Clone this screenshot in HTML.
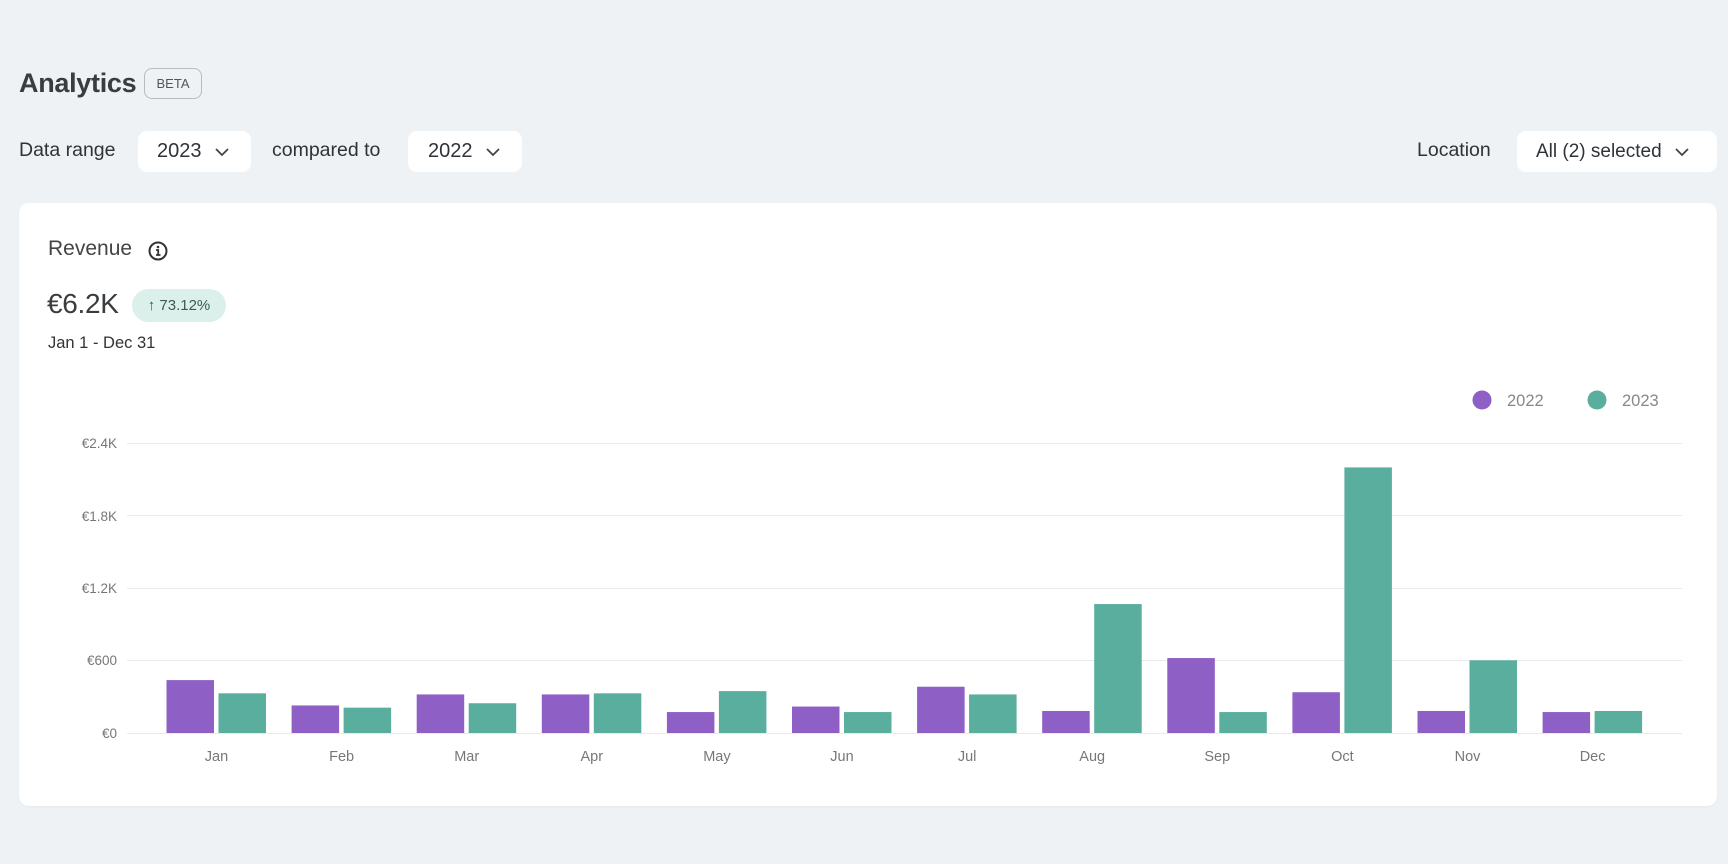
<!DOCTYPE html><html><head><meta charset="utf-8"><style>
*{margin:0;padding:0;box-sizing:border-box}
body{width:1728px;height:864px;background:#eef2f5;font-family:"Liberation Sans",sans-serif;color:#2f3337;position:relative;overflow:hidden}
.a{position:absolute;white-space:nowrap}
.dd{position:absolute;background:#fff;border-radius:9px;height:41px;display:flex;align-items:center;font-size:20px;color:#2f3337}
.dd svg{margin-left:12px}
</style></head><body>
<div class="a" style="left:19px;top:68px;font-size:27px;font-weight:bold;color:#3a3d40;letter-spacing:-0.3px">Analytics</div>
<div class="a" style="left:144px;top:68px;width:58px;height:31px;border:1.5px solid #b9bcbf;border-radius:8px;font-size:13px;color:#555;display:flex;align-items:center;justify-content:center">BETA</div>
<div class="a" style="left:19px;top:139px;font-size:19.5px">Data range</div>
<div class="dd" style="left:138px;top:131px;width:113px;padding-left:19px">2023<svg width="16" height="10" viewBox="0 0 16 10"><path d="M2 2l6 6 6-6" fill="none" stroke="#444" stroke-width="1.8"/></svg></div>
<div class="a" style="left:272px;top:139px;font-size:19.5px">compared to</div>
<div class="dd" style="left:408px;top:131px;width:114px;padding-left:20px">2022<svg width="16" height="10" viewBox="0 0 16 10"><path d="M2 2l6 6 6-6" fill="none" stroke="#444" stroke-width="1.8"/></svg></div>
<div class="a" style="left:1417px;top:139px;font-size:19.5px">Location</div>
<div class="dd" style="left:1517px;top:131px;width:200px;padding-left:19px;font-size:19px">All (2) selected<svg width="16" height="10" viewBox="0 0 16 10"><path d="M2 2l6 6 6-6" fill="none" stroke="#444" stroke-width="1.8"/></svg></div>
<div class="a" style="left:19px;top:203px;width:1698px;height:603px;background:#fff;border-radius:10px;box-shadow:0 1px 2px rgba(0,0,0,0.04)"></div>
<div class="a" style="left:48px;top:237px;font-size:21px;color:#444">Revenue</div>
<svg class="a" style="left:147px;top:240px" width="22" height="22" viewBox="0 0 22 22"><circle cx="11" cy="11" r="8.5" fill="none" stroke="#333" stroke-width="2"/><circle cx="11" cy="7" r="1.3" fill="#333"/><path d="M9 10h2.2v5M9 15h4.5" stroke="#333" stroke-width="1.8" fill="none"/></svg>
<div class="a" style="left:47px;top:288px;font-size:28px;color:#3a3d40;letter-spacing:-0.3px">€6.2K</div>
<div class="a" style="left:132px;top:289px;width:94px;height:33px;background:#dbefeb;border-radius:17px;font-size:15px;color:#3d5a55;display:flex;align-items:center;justify-content:center">↑ 73.12%</div>
<div class="a" style="left:48px;top:334px;font-size:16.5px;color:#333">Jan 1 - Dec 31</div>
<svg class="a" style="left:0;top:0" width="1728" height="864">
<g fill="#8e5fc4"><circle cx="1482" cy="400" r="9.5"/></g><circle cx="1597" cy="400" r="9.5" fill="#5aae9d"/>
<g font-family="Liberation Sans" font-size="16.5" fill="#888"><text x="1507" y="406">2022</text><text x="1622" y="406">2023</text></g>
<g stroke="#e8eaec" stroke-width="1"><line x1="127" x2="1682" y1="443.5" y2="443.5"/><line x1="127" x2="1682" y1="515.5" y2="515.5"/><line x1="127" x2="1682" y1="588.5" y2="588.5"/><line x1="127" x2="1682" y1="660.5" y2="660.5"/><line x1="127" x2="1682" y1="733.5" y2="733.5"/></g>
<g font-family="Liberation Sans" font-size="13.5" fill="#777" text-anchor="end"><text x="117" y="448">€2.4K</text><text x="117" y="521">€1.8K</text><text x="117" y="593">€1.2K</text><text x="117" y="665">€600</text><text x="117" y="738">€0</text></g>
<g id="bars"></g>
<g font-family="Liberation Sans" font-size="14.5" fill="#777" text-anchor="middle" id="lbl"></g>
</svg>
<script>
var p=[617,640,630,630,646,641,623,645,597,628,645,646],t=[629,642,638,629,627,646,630,548,646,424,599,645];
var m=["Jan","Feb","Mar","Apr","May","Jun","Jul","Aug","Sep","Oct","Nov","Dec"];
var b="",l="";
for(var i=0;i<12;i++){var c=216.5+i*125.1;
var hp=(665-p[i])*1.102,ht=(665-t[i])*1.102;
b+='<rect x="'+(c-50)+'" y="'+(733-hp)+'" width="47.5" height="'+hp+'" fill="#8e5fc4"/>';
b+='<rect x="'+(c+2)+'" y="'+(733-ht)+'" width="47.5" height="'+ht+'" fill="#5aae9d"/>';
l+='<text x="'+c+'" y="761">'+m[i]+'</text>';}
document.getElementById("bars").innerHTML=b;document.getElementById("lbl").innerHTML=l;
</script>
</body></html>
